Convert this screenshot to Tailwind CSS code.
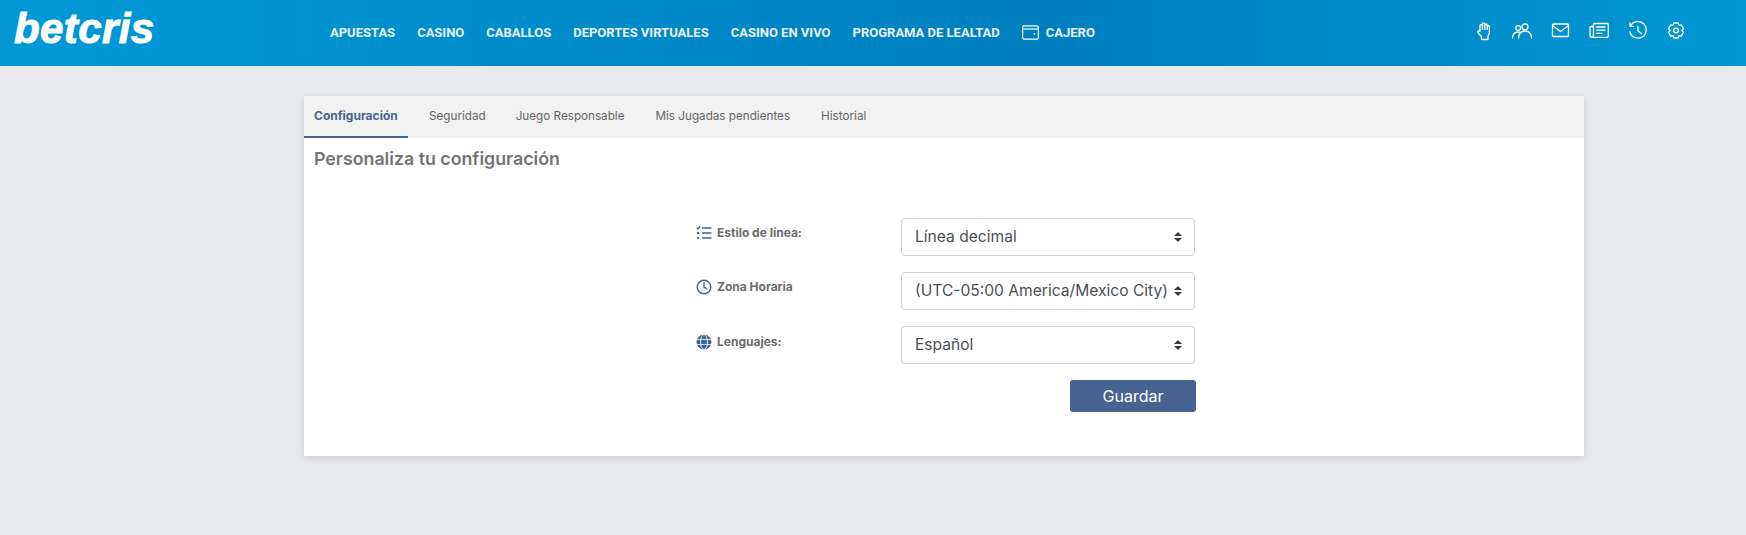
<!DOCTYPE html>
<html lang="es">
  <head>
    <meta charset="UTF-8" />
    <meta name="viewport" content="width=device-width, initial-scale=1.0" />
    <title>Configuración</title>
    <script src="https://cdn.jsdelivr.net/npm/@tailwindcss/browser@4"></script>
  </head>
  <body class="bg-[#e9eaee] min-h-screen font-['Inter',sans-serif]">
    <!-- Header -->
    <header class="h-[66px] flex items-center bg-gradient-to-r from-[#0099d6] via-[#007fbe] via-60% to-[#0097d4] text-white">
      <div class="w-[330px] shrink-0 pl-[14px]">
        <span class="font-['Liberation_Sans',sans-serif] font-bold italic text-[42px] leading-none tracking-[0.4px] [-webkit-text-stroke:1px_white] relative -top-[4px]">betcris</span>
      </div>
      <nav class="flex items-center gap-[22px] font-['Roboto',sans-serif] font-bold text-[13px] text-[#e8f1f7]">
        <a href="#">APUESTAS</a>
        <a href="#">CASINO</a>
        <a href="#">CABALLOS</a>
        <a href="#">DEPORTES VIRTUALES</a>
        <a href="#">CASINO EN VIVO</a>
        <a href="#">PROGRAMA DE LEALTAD</a>
        <a href="#" class="flex items-center gap-[7px]">
          <svg class="w-[17px] h-[15px] -mt-[2px]" viewBox="0 0 17 15" fill="none" stroke="white" stroke-width="1.2">
            <rect x="0.6" y="0.8" width="15.8" height="13.4" rx="1.5" />
            <path d="M0.6 4h15.8" />
            <circle cx="12.5" cy="8.8" r="0.9" fill="white" stroke="none" />
          </svg>
          CAJERO
        </a>
      </nav>
      <div class="ml-auto mr-[59px] -mt-[4px] flex items-center gap-[16.500px]">
        <!-- hand -->
        <svg class="w-[22px] h-[22px]" viewBox="0 0 22 22" fill="none" stroke="white" stroke-width="1.3" stroke-linejoin="round">
          <path d="M7 11V5.500a1.200 1.200 0 0 1 2.400 0V4a1.200 1.200 0 0 1 2.400 0v1a1.200 1.200 0 0 1 2.400 0v1.500a1.100 1.100 0 0 1 2.200 0V13a1 1 0 0 1-.2 1l-1.200 2v3.500H8.500V17L5 12.500c-.8-1.200.8-2.400 1.800-1.300z" />
          <path d="M9.400 5.500V10M11.800 5v5M14.200 5.500V10" />
        </svg>
        <!-- users -->
        <svg class="w-[22px] h-[22px]" viewBox="0 0 22 22" fill="none" stroke="white" stroke-width="1.3" stroke-linecap="round">
          <circle cx="7.200" cy="8" r="2.400" />
          <circle cx="14" cy="6.800" r="3" />
          <path d="M1.500 18c.3-4 2.500-6 5.500-6 1.200 0 2 .3 2.800.8" />
          <path d="M7.500 18c.3-4.300 2.800-7 6.500-7s6.200 2.700 6.500 7" />
        </svg>
        <!-- mail -->
        <svg class="w-[22px] h-[22px]" viewBox="0 0 22 22" fill="none" stroke="white" stroke-width="1.3" stroke-linejoin="round">
          <rect x="2.500" y="4" width="16" height="12.500" rx="1" />
          <path d="M2.500 5.500l8 6 8-6" />
        </svg>
        <!-- news -->
        <svg class="w-[22px] h-[22px]" viewBox="0 0 22 22" fill="none" stroke="white" stroke-width="1.3" stroke-linecap="round">
          <path d="M5.500 6.500H3a1 1 0 0 0-1 1v8a1.800 1.800 0 0 0 1.800 1.800" />
          <path d="M3.800 17.300H19a1.300 1.300 0 0 0 1.300-1.300V4.500A1 1 0 0 0 19.300 3.500H6.500a1 1 0 0 0-1 1v11a1.800 1.800 0 0 1-1.700 1.800z" />
          <path d="M8.500 7h8.500M8.500 10.200h8.500M8.500 13.400h5.500" />
        </svg>
        <!-- history -->
        <svg class="w-[22px] h-[22px]" viewBox="0 0 22 22" fill="none" stroke="white" stroke-width="1.3" stroke-linecap="round" stroke-linejoin="round">
          <path d="M3.500 6A8.300 8.300 0 1 1 2.800 11.800" />
          <path d="M3 2.800V6.300H6.500" />
          <path d="M11 6.500V11l3.500 2.500" />
        </svg>
        <!-- settings -->
        <svg class="w-[22px] h-[22px]" viewBox="0 0 22 22" fill="none" stroke="white" stroke-width="1.3" stroke-linejoin="round">
          <path d="M8.800 3h4.400l.7 2.400 2.400-.6 2.200 3.800-1.700 1.900 1.700 1.900-2.200 3.800-2.400-.6-.7 2.400H8.800l-.7-2.400-2.400.6-2.200-3.800 1.700-1.900-1.700-1.900 2.200-3.800 2.400.6z" />
          <circle cx="11" cy="10.500" r="2.400" />
        </svg>
      </div>
    </header>

    <!-- Card -->
    <main class="ml-[304px] mt-[30px] w-[1280px] h-[360px] bg-white shadow-[0_2px_8px_rgba(0,0,0,0.12)]">
      <div class="h-[42px] flex bg-[#f1f1f2] text-[11.700px] text-[#666]">
        <a href="#" class="flex items-center w-[104px] pl-[10px] border-b-2 border-[#46648f] font-bold text-[12px] text-[#46648f]">Configuración</a>
        <a href="#" class="flex items-center ml-[21px]">Seguridad</a>
        <a href="#" class="flex items-center ml-[30px]">Juego Responsable</a>
        <a href="#" class="flex items-center ml-[31px]">Mis Jugadas pendientes</a>
        <a href="#" class="flex items-center ml-[31px]">Historial</a>
      </div>
      <h2 class="pl-[10px] pt-[9px] text-[17.800px] leading-[24px] font-semibold text-[#747474]">Personaliza tu configuración</h2>

      <form class="ml-[392px] mt-[47px] w-[500px] flex flex-col gap-4">
        <div class="flex">
          <label class="w-[205px] pt-[6px] flex items-center h-[24px] gap-[5px] text-[12px] font-bold text-[#6b6b6b]">
            <svg class="w-4 h-4" viewBox="0 0 16 16" fill="none" stroke="#46648f" stroke-width="1.400">
              <path d="M0.800 2.800l1.200 1.200 2.200-2.800M6 3h9.500M6 8h9.500M6 13h9.500" />
              <path d="M1 8h3M1 13h3" stroke-width="2" stroke-dasharray="2 1" />
            </svg>
            Estilo de línea:
          </label>
          <div class="relative w-[294px]">
            <select class="w-full h-[38px] pl-[13px] pr-6 appearance-none bg-white border border-[#ced4da] rounded-[4px] text-[15.600px] text-[#495057]">
              <option>Línea decimal</option>
            </select>
            <svg class="absolute right-[13px] top-[14px] w-2 h-[10px]" viewBox="0 0 8 10" fill="#343a40"><path d="M4 0L8 4H0zM4 10L0 6h8z" /></svg>
          </div>
        </div>
        <div class="flex">
          <label class="w-[205px] pt-[6px] flex items-center h-[24px] gap-[5px] text-[12px] font-bold text-[#6b6b6b]">
            <svg class="w-4 h-4" viewBox="0 0 16 16" fill="none" stroke="#46648f" stroke-width="1.400" stroke-linecap="round">
              <circle cx="8" cy="8" r="6.800" />
              <path d="M8 3.800V8l2.800 1.800" />
            </svg>
            Zona Horaria
          </label>
          <div class="relative w-[294px]">
            <select class="w-full h-[38px] pl-[13px] pr-6 appearance-none bg-white border border-[#ced4da] rounded-[4px] text-[15.600px] text-[#495057]">
              <option>(UTC-05:00 America/Mexico City)</option>
            </select>
            <svg class="absolute right-[13px] top-[14px] w-2 h-[10px]" viewBox="0 0 8 10" fill="#343a40"><path d="M4 0L8 4H0zM4 10L0 6h8z" /></svg>
          </div>
        </div>
        <div class="flex">
          <label class="w-[205px] pt-[7px] flex items-center h-[24px] gap-[5px] text-[12px] font-bold text-[#6b6b6b]">
            <svg class="w-4 h-4" viewBox="0 0 16 16">
              <circle cx="8" cy="8" r="7.500" fill="#46648f" />
              <path d="M0.500 5.500h15M0.500 10.500h15" stroke="white" stroke-width="0.800" fill="none" />
              <ellipse cx="8" cy="8" rx="3.500" ry="7.500" stroke="white" stroke-width="0.800" fill="none" />
            </svg>
            Lenguajes:
          </label>
          <div class="relative w-[294px]">
            <select class="w-full h-[38px] pl-[13px] pr-6 appearance-none bg-white border border-[#ced4da] rounded-[4px] text-[15.600px] text-[#495057]">
              <option>Español</option>
            </select>
            <svg class="absolute right-[13px] top-[14px] w-2 h-[10px]" viewBox="0 0 8 10" fill="#343a40"><path d="M4 0L8 4H0zM4 10L0 6h8z" /></svg>
          </div>
        </div>
        <div class="flex justify-end">
          <button type="button" class="w-[126px] h-[32px] bg-[#46648f] rounded-[3px] text-white text-[16px]">Guardar</button>
        </div>
      </form>
    </main>
  </body>
</html>
